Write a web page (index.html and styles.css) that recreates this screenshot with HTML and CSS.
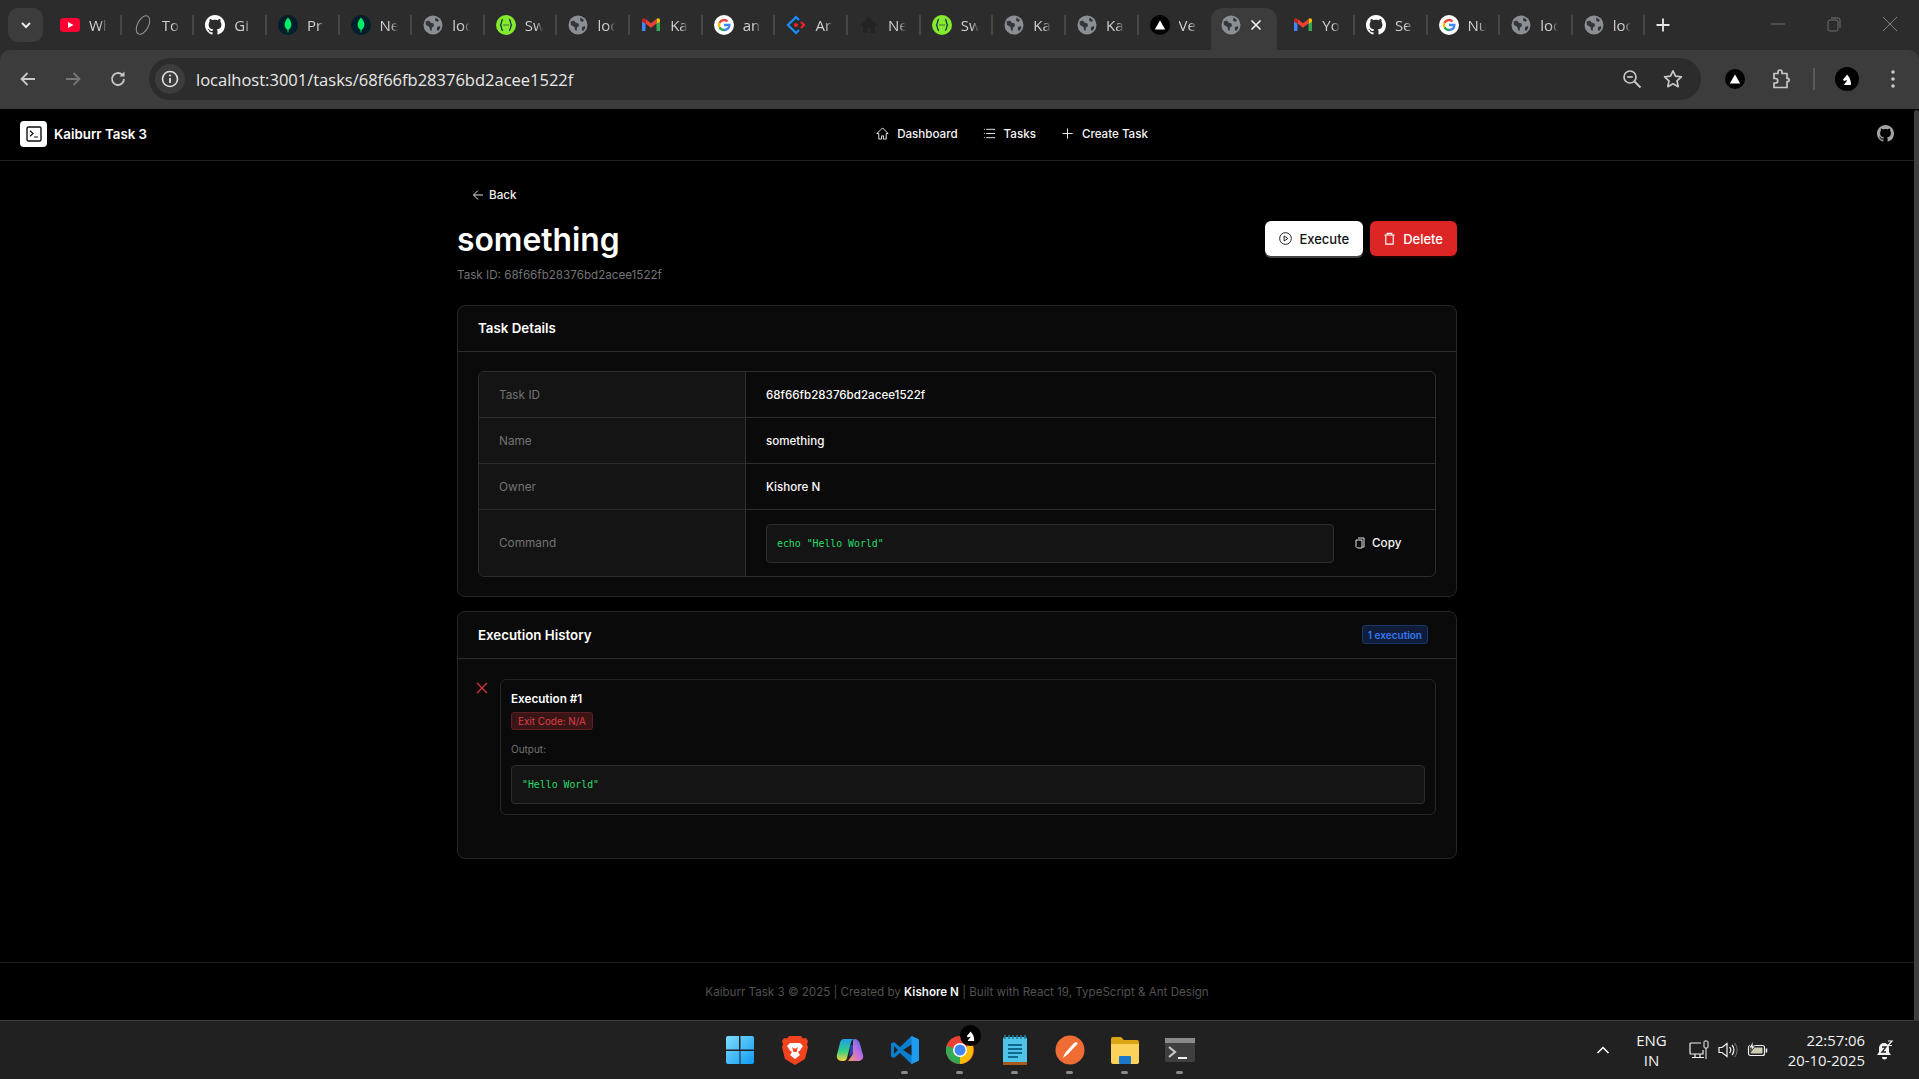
FILE: index.html
```html
<!DOCTYPE html>
<html lang="en">
<head>
    <meta charset="UTF-8">
    <title>something - Kaiburr Task 3</title>
    <link rel="stylesheet" href="styles.css">
</head>
<body>
    <svg class="sprites" width="0" height="0">
        <symbol id="i-yt" viewBox="0 0 20 20"><rect x="0" y="3" width="20" height="14" rx="3.500" fill="#ff0033"/><path d="M8 7l5.500 3L8 13z" fill="#fff"/></symbol>
        <symbol id="i-oval" viewBox="0 0 20 20"><ellipse cx="10" cy="10" rx="5.500" ry="10" transform="rotate(28 10 10)" fill="none" stroke="#9a9a9a" stroke-width="1"/></symbol>
        <symbol id="i-gh" viewBox="0 0 16 16"><path fill="currentColor" d="M8 0C3.580 0 0 3.580 0 8c0 3.540 2.290 6.530 5.470 7.590.4.070.55-.17.55-.38 0-.19-.01-.82-.01-1.490-2.010.37-2.530-.49-2.690-.94-.09-.23-.48-.94-.82-1.130-.28-.15-.68-.52-.01-.53.63-.01 1.080.58 1.230.82.72 1.210 1.870.87 2.330.66.07-.52.28-.87.51-1.070-1.780-.2-3.640-.89-3.640-3.950 0-.87.31-1.590.82-2.150-.08-.2-.36-1.020.08-2.120 0 0 .67-.21 2.200.82.64-.18 1.320-.27 2-.27.68 0 1.360.09 2 .27 1.530-1.040 2.200-.82 2.200-.82.44 1.100.16 1.920.08 2.120.51.56.82 1.270.82 2.150 0 3.070-1.870 3.750-3.650 3.950.29.25.54.73.54 1.480 0 1.070-.01 1.930-.01 2.200 0 .21.15.46.55.38A8.013 8.013 0 0016 8c0-4.420-3.580-8-8-8z"/></symbol>
        <symbol id="i-mongo" viewBox="0 0 20 20"><circle cx="10" cy="10" r="10" fill="#001e2b"/><path d="M10 2.500c2.600 2.900 3.600 5.400 3.400 7.600-.2 2.400-1.700 4-2.900 4.800l-.2 2.600h-.6l-.2-2.600c-1.300-.9-2.800-2.500-2.900-4.900C6.500 7.800 7.500 5.300 10 2.500z" fill="#00ed64"/></symbol>
        <symbol id="i-globe" viewBox="0 0 20 20"><circle cx="10" cy="10" r="9.500" fill="#8b8f94"/><path d="M2.500 6.500l3.500-1 1.500 2 3 1 .5 2.500-2 1.500-.5 3.500-1.500-1-.5-3-3.500-2zM12.500 2.500l3.500 2.500-1.500 2-2.500-1.500zM14 12l3-1 .3 2-2 3-1.500-1z" fill="#34363a"/></symbol>
        <symbol id="i-swagger" viewBox="0 0 20 20"><circle cx="10" cy="10" r="10" fill="#85ea2d"/><path d="M7 4.500c-2 0-1 4-2.500 5.500C6 11.500 5 15.500 7 15.500M13 4.500c2 0 1 4 2.500 5.500-1.500 1.500-.5 5.500-2.500 5.500" fill="none" stroke="#173647" stroke-width="1.300"/><path d="M7.600 10h.9M9.600 10h.9M11.600 10h.9" stroke="#173647" stroke-width="1.300"/></symbol>
        <symbol id="i-gmail" viewBox="0 0 20 20"><path d="M1 5.500V16h3.500V8z" fill="#4285f4"/><path d="M15.500 8V16H19V5.500z" fill="#34a853"/><path d="M15.500 4v5L19 6.500V5c0-1.800-2.200-2.500-3.500-1z" fill="#fbbc04"/><path d="M4.500 8.500V4L10 8.200 15.500 4v4.500L10 12.700z" fill="#ea4335"/><path d="M1 5c0-1.800 2.200-2.500 3.500-1v5L1 6.500z" fill="#c5221f"/></symbol>
        <symbol id="i-google" viewBox="0 0 20 20"><circle cx="10" cy="10" r="10" fill="#fff"/><path d="M10 10h5.300c0 3-2.200 5-5.300 5" fill="none" stroke="#4285f4" stroke-width="2.400"/><path d="M10 15a5 5 0 01-4.500-2.800" fill="none" stroke="#34a853" stroke-width="2.400"/><path d="M5.500 12.300a5 5 0 010-4.600" fill="none" stroke="#fbbc04" stroke-width="2.400"/><path d="M5.500 7.700A5 5 0 0113.500 6.500" fill="none" stroke="#ea4335" stroke-width="2.400"/></symbol>
        <symbol id="i-ant" viewBox="0 0 20 20"><path d="M13 5l-3-3-8 8 8 8 3-3" fill="none" stroke="#1890ff" stroke-width="2.200"/><path d="M15 7l3 3-3 3" fill="none" stroke="#f5222d" stroke-width="2.200"/><circle cx="10" cy="10" r="2.100" fill="#f5222d"/></symbol>
        <symbol id="i-house" viewBox="0 0 20 20"><path d="M10 2L1 10.500h3V18h4.500v-5h3v5H16v-7.500h3z" fill="#232323"/></symbol>
        <symbol id="i-vercel" viewBox="0 0 20 20"><circle cx="10" cy="10" r="10" fill="#000"/><path d="M10 5.500l5.200 9H4.800z" fill="#fff"/></symbol>
    </svg>

    <div class="tabstrip">
        <button class="tab-search"><svg width="14" height="14" viewBox="0 0 14 14"><path d="M3 5l4 4 4-4" fill="none" stroke="#e8e8e8" stroke-width="2"/></svg></button>
        <div class="tab"><svg class="fav"><use href="#i-yt"/></svg><span class="tab-title">Wh</span></div>
        <div class="tab"><svg class="fav"><use href="#i-oval"/></svg><span class="tab-title">To</span></div>
        <div class="tab"><svg class="fav"><use href="#i-gh"/></svg><span class="tab-title">Gi</span></div>
        <div class="tab"><svg class="fav"><use href="#i-mongo"/></svg><span class="tab-title">Pr</span></div>
        <div class="tab"><svg class="fav"><use href="#i-mongo"/></svg><span class="tab-title">Ne</span></div>
        <div class="tab"><svg class="fav"><use href="#i-globe"/></svg><span class="tab-title">localhost</span></div>
        <div class="tab"><svg class="fav"><use href="#i-swagger"/></svg><span class="tab-title">Sw</span></div>
        <div class="tab"><svg class="fav"><use href="#i-globe"/></svg><span class="tab-title">localhost</span></div>
        <div class="tab"><svg class="fav"><use href="#i-gmail"/></svg><span class="tab-title">Ka</span></div>
        <div class="tab"><svg class="fav"><use href="#i-google"/></svg><span class="tab-title">an</span></div>
        <div class="tab"><svg class="fav"><use href="#i-ant"/></svg><span class="tab-title">Ar</span></div>
        <div class="tab"><svg class="fav"><use href="#i-house"/></svg><span class="tab-title">Ne</span></div>
        <div class="tab"><svg class="fav"><use href="#i-swagger"/></svg><span class="tab-title">Sw</span></div>
        <div class="tab"><svg class="fav"><use href="#i-globe"/></svg><span class="tab-title">Ka</span></div>
        <div class="tab"><svg class="fav"><use href="#i-globe"/></svg><span class="tab-title">Ka</span></div>
        <div class="tab no-sep"><svg class="fav"><use href="#i-vercel"/></svg><span class="tab-title">Ve</span></div>
        <div class="tab tab-active no-sep"><svg class="fav"><use href="#i-globe"/></svg><svg class="tab-close" width="14" height="14" viewBox="0 0 14 14"><path d="M2.500 2.500l9 9M11.500 2.500l-9 9" stroke="#f0f0f0" stroke-width="1.700"/></svg></div>
        <div class="tab"><svg class="fav"><use href="#i-gmail"/></svg><span class="tab-title">Yo</span></div>
        <div class="tab"><svg class="fav"><use href="#i-gh"/></svg><span class="tab-title">Se</span></div>
        <div class="tab"><svg class="fav"><use href="#i-google"/></svg><span class="tab-title">Nu</span></div>
        <div class="tab"><svg class="fav"><use href="#i-globe"/></svg><span class="tab-title">localhost</span></div>
        <div class="tab"><svg class="fav"><use href="#i-globe"/></svg><span class="tab-title">localhost</span></div>
        <svg class="new-tab" width="16" height="16" viewBox="0 0 16 16"><path d="M8 1.500v13M1.500 8h13" stroke="#e8e8e8" stroke-width="1.800"/></svg>
        <div class="window-btns">
            <svg width="16" height="16" viewBox="0 0 16 16"><path d="M1 8h14" stroke="#6f6f6f"/></svg>
            <svg width="16" height="16" viewBox="0 0 16 16"><rect x="2" y="4" width="10" height="11" rx="2" fill="none" stroke="#6f6f6f"/><path d="M5 2h7a2 2 0 012 2v8" fill="none" stroke="#6f6f6f"/></svg>
            <svg width="16" height="16" viewBox="0 0 16 16"><path d="M1 1l14 14M15 1L1 15" stroke="#7f7f7f"/></svg>
        </div>
    </div>

    <div class="toolbar">
        <svg class="nav-btn" width="20" height="20" viewBox="0 0 20 20"><path d="M17 10H4M9.500 4L3.500 10l6 6" fill="none" stroke="#c8c8c8" stroke-width="1.800"/></svg>
        <svg class="nav-btn" width="20" height="20" viewBox="0 0 20 20"><path d="M3 10h13M10.500 4l6 6-6 6" fill="none" stroke="#777" stroke-width="1.800"/></svg>
        <svg class="nav-btn" width="20" height="20" viewBox="0 0 20 20"><path d="M16 10a6 6 0 11-1.800-4.300" fill="none" stroke="#c8c8c8" stroke-width="1.800"/><path d="M16.500 2.500v5h-5z" fill="#c8c8c8"/></svg>
        <div class="omnibox">
            <span class="site-info"><svg width="18" height="18" viewBox="0 0 18 18"><circle cx="9" cy="9" r="7.500" fill="none" stroke="#e0e0e0" stroke-width="1.600"/><path d="M9 8v5" stroke="#e0e0e0" stroke-width="1.800"/><circle cx="9" cy="5.500" r="1.100" fill="#e0e0e0"/></svg></span>
            <span class="url">localhost:3001/tasks/68f66fb28376bd2acee1522f</span>
            <svg class="omni-zoom" width="20" height="20" viewBox="0 0 20 20"><circle cx="8" cy="8" r="6" fill="none" stroke="#c8c8c8" stroke-width="1.700"/><path d="M5.200 8h5.600" stroke="#c8c8c8" stroke-width="1.700"/><path d="M12.500 12.500l6 6" stroke="#c8c8c8" stroke-width="1.900"/></svg>
            <svg class="omni-star" width="20" height="20" viewBox="0 0 20 20"><path d="M10 1.800l2.500 5.400 5.900.7-4.400 4 1.200 5.800L10 14.800l-5.200 2.900L6 11.900l-4.400-4 5.900-.7z" fill="none" stroke="#c8c8c8" stroke-width="1.700" stroke-linejoin="round"/></svg>
        </div>
        <svg class="ext-vercel" width="20" height="20"><use href="#i-vercel"/></svg>
        <svg class="ext-puzzle" width="20" height="20" viewBox="0 0 20 20"><path d="M2 4.500h4V3a2 2 0 014 0v1.500h5v5h1.500a2 2 0 010 3H15V18.500H2v-4.500h1.500a2.200 2.200 0 000-4.500H2z" fill="none" stroke="#c8c8c8" stroke-width="1.700" stroke-linejoin="round"/></svg>
        <span class="toolbar-sep"></span>
        <span class="profile"><svg width="12" height="13" viewBox="0 0 12 13"><path d="M3 12h7c0-3-.5-6-2-8L6 1.500 5 3 2 6.500l1 1.500 3-1c0 1.500-2 2.500-3 5z" fill="#fff"/></svg></span>
        <svg class="menu-dots" width="4" height="18" viewBox="0 0 4 18"><circle cx="2" cy="2" r="1.800" fill="#c8c8c8"/><circle cx="2" cy="9" r="1.800" fill="#c8c8c8"/><circle cx="2" cy="16" r="1.800" fill="#c8c8c8"/></svg>
    </div>

    <div class="viewport">
        <div class="page">
            <header class="app-header">
                <div class="brand">
                    <span class="brand-logo"><svg width="16" height="16" viewBox="0 0 16 16"><rect x="1" y="1" width="14" height="14" rx="1.500" fill="none" stroke="#111" stroke-width="1.400"/><path d="M4 4.800L7 7.500 4 10.200M8 11h4" fill="none" stroke="#111" stroke-width="1.200"/></svg></span>
                    <span class="brand-name">Kaiburr Task 3</span>
                </div>
                <nav class="main-nav">
                    <a class="nav-link"><svg width="13" height="13" viewBox="0 0 14 14"><path d="M7 1L1 7h2v6h3V9.500h2V13h3V7h2z" fill="none" stroke="#f5f5f5" stroke-linejoin="round"/></svg>Dashboard</a>
                    <a class="nav-link"><svg width="13" height="13" viewBox="0 0 14 14"><path d="M3.500 2.500H13M3.500 7H13M3.500 11.500H13" stroke="#f5f5f5"/><path d="M1 2.500h1M1 7h1M1 11.500h1" stroke="#f5f5f5"/></svg>Tasks</a>
                    <a class="nav-link"><svg width="13" height="13" viewBox="0 0 14 14"><path d="M7 1.500v11M1.500 7h11" stroke="#f5f5f5"/></svg>Create Task</a>
                </nav>
                <svg class="header-github" width="17" height="17"><use href="#i-gh"/></svg>
            </header>

            <main class="content">
                <button class="back-btn"><svg width="12" height="12" viewBox="0 0 12 12"><path d="M11 6H1.500M6 1.500L1.500 6 6 10.500" fill="none" stroke="#e5e5e5"/></svg>Back</button>
                <div class="title-row">
                    <div>
                        <h1 class="task-title">something</h1>
                        <p class="task-sub">Task ID: 68f66fb28376bd2acee1522f</p>
                    </div>
                    <div class="title-actions">
                        <button class="btn btn-white"><svg width="13" height="13" viewBox="0 0 14 14"><circle cx="7" cy="7" r="6.300" fill="none" stroke="#111"/><path d="M5.500 4.300L9.500 7l-4 2.700z" fill="none" stroke="#111"/></svg>Execute</button>
                        <button class="btn btn-red"><svg width="13" height="13" viewBox="0 0 14 14"><path d="M1.500 3.200h11M4.500 3V1.500h5V3M3 3.200V13h8V3.200" fill="none" stroke="#fff" stroke-width="1.200"/></svg>Delete</button>
                    </div>
                </div>

                <section class="card">
                    <div class="card-head"><h3>Task Details</h3></div>
                    <div class="card-body">
                        <div class="detail-table">
                            <div class="detail-row">
                                <div class="detail-label">Task ID</div>
                                <div class="detail-value">68f66fb28376bd2acee1522f</div>
                            </div>
                            <div class="detail-row">
                                <div class="detail-label">Name</div>
                                <div class="detail-value">something</div>
                            </div>
                            <div class="detail-row">
                                <div class="detail-label">Owner</div>
                                <div class="detail-value">Kishore N</div>
                            </div>
                            <div class="detail-row detail-row-cmd">
                                <div class="detail-label">Command</div>
                                <div class="detail-value">
                                    <code class="code-box">echo "Hello World"</code>
                                    <button class="copy-btn"><svg width="12" height="12" viewBox="0 0 12 12"><path d="M4 1h6v9H8.500M2 3h6v8H3.500L2 9.500z" fill="none" stroke="#e5e5e5"/></svg>Copy</button>
                                </div>
                            </div>
                        </div>
                    </div>
                </section>

                <section class="card">
                    <div class="card-head card-head-tall">
                        <h3>Execution History</h3>
                        <span class="count-tag">1 execution</span>
                    </div>
                    <div class="card-body card-body-history">
                        <div class="timeline-item">
                            <svg class="timeline-x" width="14" height="14" viewBox="0 0 14 14"><path d="M2 2l10 10M12 2L2 12" stroke="#d9363e" stroke-width="1.200"/></svg>
                            <div class="exec-box">
                                <div class="exec-title">Execution #1</div>
                                <span class="exit-tag">Exit Code: N/A</span>
                                <div class="exec-label">Output:</div>
                                <code class="code-box code-box-full">"Hello World"</code>
                            </div>
                        </div>
                    </div>
                </section>
            </main>

            <footer class="app-footer">Kaiburr Task 3 © 2025 | Created by <strong>Kishore N</strong> | Built with React 19, TypeScript &amp; Ant Design</footer>
        </div>
        <div class="scrollbar"><div class="scroll-thumb"></div></div>
    </div>

    <div class="taskbar">
        <div></div>
        <div class="task-icons">
            <span class="task-icon"><svg width="30" height="30" viewBox="0 0 30 30"><defs><linearGradient id="win" x1="0" y1="0" x2="1" y2="1"><stop offset="0" stop-color="#7fdcff"/><stop offset="1" stop-color="#0f9bf0"/></linearGradient></defs><path d="M1 3a2 2 0 012-2h11v13.500H1zM15.500 1H27a2 2 0 012 2v11.500H15.500zM1 16h13.500v13H3a2 2 0 01-2-2zM15.500 16H29v11a2 2 0 01-2 2H15.500z" fill="url(#win)"/></svg></span>
            <span class="task-icon"><svg width="28" height="30" viewBox="0 0 28 30"><path d="M8 1h12l2 2.500 3-.5 2 3-1 3.500 1 2.500-3 12-10 6-10-6-3-12 1-2.500-1-3.500 2-3 3 .5z" fill="#f1431e"/><path d="M9 8h10l3 3-3 4.500-2 1.500 2 3-5 4-5-4 2-3-2-1.500L6 11z" fill="#fff"/><path d="M11 12l2 1.500h2l2-1.500-1.500 5h-3z" fill="#f1431e"/></svg></span>
            <span class="task-icon"><svg width="30" height="30" viewBox="0 0 30 30"><defs><linearGradient id="cop1" x1="0" y1="0" x2="0" y2="1"><stop offset="0" stop-color="#1f9fe8"/><stop offset=".55" stop-color="#35cf86"/><stop offset="1" stop-color="#f6d23c"/></linearGradient><linearGradient id="cop2" x1="1" y1="0" x2="0" y2="1"><stop offset="0" stop-color="#2a6bea"/><stop offset=".5" stop-color="#c86fe0"/><stop offset="1" stop-color="#f79a56"/></linearGradient></defs><path d="M19 4c3 0 5 1.500 6 5l3 11c1 3.500-1.500 6-4.500 6H13l5-7V8c0-2 0-4 1-4z" fill="url(#cop2)"/><path d="M9 4h10c-1.500 0-2.500 1.500-3 3.500L12 23c-.5 2-1.500 3-3.500 3H7c-4 0-6-3-5-6.500L5 8c.6-2.500 2-4 4-4z" fill="url(#cop1)"/><path d="M15.500 9.500l2.500 1v8l-3.500 3z" fill="#2446b8"/></svg></span>
            <span class="task-icon"><svg width="30" height="30" viewBox="0 0 30 30"><path d="M21.500 1L29 4.500v21L21.500 29 10 18l-6 5-3-1.500v-13L4 7l6 5z" fill="#0a7fcf"/><path d="M21.500 1L29 4.500v21L21.500 29z" fill="#1f9cf0"/><path d="M21.500 9.500L13 15l8.500 5.500z" fill="#222"/><path d="M4 11v8l4-4z" fill="#222"/></svg></span>
            <span class="task-icon"><svg width="30" height="30" viewBox="0 0 30 30"><circle cx="15" cy="15" r="14" fill="#ea4335"/><path d="M15 15L27 9a14 14 0 01-12 20z" fill="#fbbc04"/><path d="M15 15L15 29A14 14 0 011.500 11z" fill="#34a853"/><circle cx="15" cy="15" r="7" fill="#fff"/><circle cx="15" cy="15" r="5.500" fill="#4285f4"/></svg><span class="task-badge"><svg width="11" height="12" viewBox="0 0 12 13"><path d="M3 12h7c0-3-.5-6-2-8L6 1.500 5 3 2 6.500l1 1.500 3-1c0 1.500-2 2.500-3 5z" fill="#fff"/></svg></span></span>
            <span class="task-icon"><svg width="26" height="32" viewBox="0 0 26 32"><rect x="1" y="3" width="24" height="28" rx="2" fill="#4fc3e8"/><rect x="1" y="28" width="24" height="3" fill="#a85a1c"/><path d="M3 1v4M7 1v4M11 1v4M15 1v4M19 1v4M23 1v4" stroke="#1a7fa8" stroke-width="1.600"/><path d="M6 11h14M6 15h14M6 19h14M6 23h10" stroke="#10688c" stroke-width="1.800"/></svg></span>
            <span class="task-icon"><svg width="30" height="30" viewBox="0 0 30 30"><circle cx="15" cy="15" r="14.500" fill="#ef6c35"/><path d="M8 23l2-5 9-10c1.500-1.500 4-1 3.500 1l-10 10.500z" fill="#fff"/></svg></span>
            <span class="task-icon"><svg width="30" height="28" viewBox="0 0 30 28"><path d="M1 3a2 2 0 012-2h8l3 3h13a2 2 0 012 2v5H1z" fill="#dca515"/><path d="M1 8h28v18a2 2 0 01-2 2H3a2 2 0 01-2-2z" fill="#fdd25a"/><rect x="9" y="20" width="12" height="8" rx="1" fill="#1976c9"/></svg></span>
            <span class="task-icon"><svg width="30" height="24" viewBox="0 0 30 24"><rect width="30" height="24" rx="2" fill="#3f3f3f"/><rect width="30" height="5" fill="#8a8a8a"/><path d="M4 9l6 5-6 5" fill="none" stroke="#c8c8c8" stroke-width="2.200"/><path d="M13 20h9" stroke="#f5f5f5" stroke-width="2"/></svg></span>
        </div>
        <div class="tray">
            <svg width="14" height="14" viewBox="0 0 14 14"><path d="M1.500 10L7 4.500 12.500 10" fill="none" stroke="#fff" stroke-width="1.500"/></svg>
            <div class="tray-lang"><span>ENG</span><span>IN</span></div>
            <svg class="tray-net" width="21" height="20" viewBox="0 0 21 20"><path d="M12 3H2a1 1 0 00-1 1v9a1 1 0 001 1h12v-4M6 14v3M3 17.500h12M11 14v3" fill="none" stroke="#f2f2f2" stroke-width="1.200"/><rect x="15" y="1" width="4" height="7" rx="1" fill="none" stroke="#f2f2f2"/><path d="M17 8v11" stroke="#f2f2f2"/></svg>
            <svg class="tray-vol" width="21" height="18" viewBox="0 0 21 18"><path d="M1 6.500v5h3l5 4v-13l-5 4z" fill="none" stroke="#f2f2f2" stroke-width="1.200"/><path d="M11.500 6a4.500 4.500 0 010 6M14 4a7.500 7.500 0 010 10" fill="none" stroke="#f2f2f2" stroke-width="1.200"/><path d="M16.500 2a10.500 10.500 0 010 14" fill="none" stroke="#666" stroke-width="1.200"/></svg>
            <svg class="tray-batt" width="21" height="18" viewBox="0 0 21 18"><rect x="1.500" y="4.500" width="16" height="10" rx="2" fill="none" stroke="#f2f2f2" stroke-width="1.200"/><rect x="3.500" y="6.500" width="12" height="6" rx="1" fill="#cfc9b0"/><path d="M19.500 7.500v4" stroke="#f2f2f2" stroke-width="1.500"/><path d="M6 0L2 7h3L3.500 11 8.500 5H6z" fill="#f2f2f2" stroke="#212121" stroke-width=".8"/></svg>
            <div class="tray-clock"><span>22:57:06</span><span>20-10-2025</span></div>
            <svg class="tray-bell" width="20" height="20" viewBox="0 0 20 20"><path d="M9 3a5 5 0 00-5 5v4l-2 3h14l-2-3V8a5 5 0 00-5-5z" fill="#f2f2f2"/><path d="M7 17a2.500 2.500 0 005 0z" fill="#f2f2f2"/><path d="M7 7h4l-4 5h4" fill="none" stroke="#202020" stroke-width="1.300"/><path d="M13 1h4l-4 4.500h4" fill="none" stroke="#f2f2f2" stroke-width="1.200"/></svg>
        </div>
    </div>
</body>
</html>
```

FILE: styles.css
```css
* {
    box-sizing: border-box;
}
html, body {
    height: 100%;
}
body {
    margin: 0;
    height: 100vh;
    overflow: hidden;
    display: flex;
    flex-direction: column;
    font-family: Inter, "Liberation Sans", sans-serif;
    background-color: #2c2c2c;
    color: #fff;
}
button {
    font-family: inherit;
    border: none;
    background: none;
    cursor: pointer;
}
.sprites {
    position: absolute;
}

/* browser chrome */
.tabstrip {
    height: 50px;
    flex-shrink: 0;
    display: flex;
    align-items: flex-start;
    padding-left: 8px;
    background-color: #2c2c2c;
    font-family: "Open Sans", "Liberation Sans", sans-serif;
}
.tab-search {
    width: 35px;
    height: 34px;
    margin: 8px 6px 0 0;
    padding: 0;
    display: flex;
    align-items: center;
    justify-content: center;
    border-radius: 10px;
    background-color: #3c3c3c;
}
.tab {
    width: 72.65px;
    height: 42px;
    margin-top: 8px;
    padding: 0 0 8px 11px;
    display: flex;
    align-items: center;
    gap: 9px;
    position: relative;
    color: #fff;
}
.tab::after {
    content: "";
    position: absolute;
    right: 0;
    top: 7px;
    height: 20px;
    width: 2px;
    background-color: #474747;
}
.tab.no-sep::after {
    display: none;
}
.fav {
    width: 20px;
    height: 20px;
    flex-shrink: 0;
}
.tab-title {
    width: 18px;
    overflow: hidden;
    white-space: nowrap;
    font-size: 15px;
    color: #cfcfcf;
    -webkit-mask-image: linear-gradient(to right, #000 60%, transparent);
    mask-image: linear-gradient(to right, #000 60%, transparent);
}
.tab-active {
    width: 66px;
    padding: 0 14px 8px 10px;
    justify-content: space-between;
    gap: 0;
    background-color: #3c3c3c;
    border-radius: 12px 12px 0 0;
}
.tab-active + .tab {
    margin-left: 5px;
}
.tab-close {
    flex-shrink: 0;
}
.new-tab {
    margin: 17px 0 0 10px;
}
.window-btns {
    margin-left: auto;
    padding: 16px 21px 0 0;
    display: flex;
    gap: 40px;
}
.toolbar {
    height: 59px;
    flex-shrink: 0;
    display: flex;
    align-items: flex-start;
    padding: 8px 0 0 18px;
    background-color: #3c3c3c;
    border-radius: 10px 10px 0 0;
}
.nav-btn {
    margin: 11px 25px 0 0;
}
.nav-btn:nth-child(3) {
    margin-right: 21px;
}
.omnibox {
    width: 1552px;
    height: 42px;
    flex-shrink: 0;
    display: flex;
    align-items: center;
    padding: 0 18px 0 6px;
    border-radius: 21px;
    background-color: #2c2c2c;
}
.site-info {
    width: 30px;
    height: 30px;
    display: flex;
    align-items: center;
    justify-content: center;
    border-radius: 50%;
    background-color: #3c3c3c;
}
.url {
    margin-left: 11px;
    font-family: "Open Sans", "Liberation Sans", sans-serif;
    font-size: 16.5px;
    color: #e8e8e8;
}
.omni-zoom {
    margin-left: auto;
}
.omni-star {
    margin-left: 21px;
}
.ext-vercel {
    margin: 11px 0 0 24px;
}
.ext-puzzle {
    margin: 11px 0 0 27px;
}
.toolbar-sep {
    width: 2px;
    height: 22px;
    margin: 10px 0 0 21px;
    background-color: #5a5a5a;
}
.profile {
    width: 24px;
    height: 24px;
    margin: 9px 0 0 20px;
    display: flex;
    align-items: center;
    justify-content: center;
    border-radius: 50%;
    background-color: #000;
}
.menu-dots {
    margin: 12px 0 0 32px;
}

/* app page */
.viewport {
    flex: 1;
    min-height: 0;
    display: flex;
    background-color: #000;
}
.page {
    flex: 1;
    min-width: 0;
    display: flex;
    flex-direction: column;
}
.scrollbar {
    width: 5px;
    padding-top: 1px;
    background-color: #000;
}
.scroll-thumb {
    height: 100%;
    border-radius: 3px 3px 0 0;
    background-color: #3f3f3f;
}
.app-header {
    height: 52px;
    flex-shrink: 0;
    display: flex;
    align-items: center;
    justify-content: space-between;
    padding: 0 20px 2px;
    border-bottom: 1px solid #1f1f1f;
}
.header-github {
    color: #a3a3a3;
}
.brand {
    display: flex;
    align-items: center;
    gap: 7px;
}
.brand-logo {
    width: 27px;
    height: 26px;
    display: flex;
    align-items: center;
    justify-content: center;
    border-radius: 4px;
    background-color: #fff;
}
.brand-name {
    font-size: 13.3px;
    font-weight: 600;
}
.main-nav {
    display: flex;
    gap: 25px;
}
.nav-link {
    display: flex;
    align-items: center;
    gap: 8px;
    font-size: 11.6px;
    font-weight: 500;
    color: #f5f5f5;
}
.content {
    flex: 1;
    width: 1000px;
    margin: 0 auto;
    padding-top: 22px;
}
.back-btn {
    height: 24px;
    padding: 0 0 0 15px;
    display: flex;
    align-items: center;
    gap: 5px;
    font-size: 11.7px;
    font-weight: 500;
    color: #f0f0f0;
}
.title-row {
    display: flex;
    justify-content: space-between;
    align-items: flex-start;
    margin-top: 13px;
    margin-bottom: 21px;
}
.task-title {
    margin: 0;
    font-size: 31.8px;
    font-weight: 600;
    line-height: 40px;
}
.task-sub {
    margin: 6px 0 0;
    font-size: 11.65px;
    line-height: 18px;
    color: #737373;
}
.title-actions {
    display: flex;
    gap: 7px;
    margin-top: 1px;
}
.btn {
    height: 35px;
    padding: 0 14px;
    display: flex;
    align-items: center;
    gap: 7px;
    font-size: 13px;
    font-weight: 500;
    border-radius: 6px;
}
.btn-white {
    background-color: #fff;
    color: #111;
    box-shadow: 0 2px 0 #444;
}
.btn-red {
    padding: 0 14px 0 13px;
    background-color: #dc2626;
    color: #fff;
    box-shadow: 0 2px 0 #1a0505;
}
.card {
    margin-bottom: 14px;
    background-color: #0a0a0a;
    border: 1px solid #262626;
    border-radius: 8px;
}
.card-head {
    height: 46px;
    padding: 0 28px 1px 20px;
    display: flex;
    align-items: center;
    justify-content: space-between;
    border-bottom: 1px solid #2e2e2e;
}
.card-head-tall {
    height: 47px;
}
.card-head h3 {
    margin: 0;
    font-size: 13.3px;
    font-weight: 600;
}
.card-body {
    padding: 19px 20px 19px;
}
.detail-table {
    border: 1px solid #2e2e2e;
    border-radius: 6px;
    overflow: hidden;
}
.detail-row {
    display: flex;
    height: 46px;
    border-bottom: 1px solid #2e2e2e;
}
.detail-row-cmd {
    height: 66px;
    border-bottom: none;
}
.detail-label {
    width: 267px;
    flex-shrink: 0;
    display: flex;
    align-items: center;
    padding-left: 20px;
    font-size: 11.8px;
    color: #737373;
    background-color: #141414;
    border-right: 1px solid #2e2e2e;
}
.detail-value {
    flex: 1;
    display: flex;
    align-items: center;
    padding-left: 20px;
    font-size: 11.6px;
    font-weight: 500;
    color: #fafafa;
}
.code-box {
    display: block;
    width: 568px;
    height: 39px;
    padding: 0 10px;
    line-height: 37px;
    font-family: "DejaVu Sans Mono", "Liberation Mono", monospace;
    font-size: 9.85px;
    font-weight: 400;
    color: #2bdc6c;
    background-color: #141414;
    border: 1px solid #2e2e2e;
    border-radius: 4px;
}
.code-box-full {
    width: 100%;
}
.copy-btn {
    margin-left: 20px;
    padding: 0;
    display: flex;
    align-items: center;
    gap: 6px;
    font-size: 11.7px;
    font-weight: 500;
    color: #f5f5f5;
}
.count-tag {
    height: 19px;
    padding: 0 5px;
    display: flex;
    align-items: center;
    font-size: 10px;
    font-weight: 600;
    color: #3578f5;
    background-color: #101d38;
    border: 1px solid #1c3666;
    border-radius: 3px;
}
.card-body-history {
    padding: 20px 20px 43px 20px;
}
.timeline-item {
    display: flex;
    align-items: flex-start;
    margin-left: -3px;
}
.timeline-x {
    flex-shrink: 0;
    margin: 2px 11px 0 0;
    width: 14px;
}
.exec-box {
    flex: 1;
    height: 136px;
    padding: 11px 10px 0;
    background-color: #0a0a0a;
    border: 1px solid #262626;
    border-radius: 6px;
}
.exec-title {
    font-size: 11.7px;
    font-weight: 600;
    line-height: 16px;
}
.exit-tag {
    display: inline-block;
    height: 18px;
    margin-top: 5px;
    padding: 0 6px;
    line-height: 16px;
    font-size: 9.9px;
    color: #dc4040;
    background-color: #3a1518;
    border: 1px solid #5c1f22;
    border-radius: 3px;
}
.exec-label {
    margin-top: 12px;
    margin-bottom: 9px;
    font-size: 10px;
    line-height: 14px;
    color: #737373;
}
.app-footer {
    height: 58px;
    flex-shrink: 0;
    display: flex;
    align-items: center;
    justify-content: center;
    white-space: pre;
    font-size: 11.6px;
    color: #525252;
    border-top: 1px solid #1f1f1f;
}
.app-footer strong {
    font-weight: 600;
    color: #f5f5f5;
}

/* windows taskbar */
.taskbar {
    height: 59px;
    flex-shrink: 0;
    display: grid;
    grid-template-columns: 1fr auto 1fr;
    align-items: center;
    background-color: #212121;
    border-top: 1px solid #3a3a3a;
    font-family: "Open Sans", "Liberation Sans", sans-serif;
}
.task-icons {
    display: flex;
}
.task-icon {
    width: 55px;
    height: 58px;
    display: flex;
    align-items: center;
    justify-content: center;
    position: relative;
}
.task-icon:nth-child(n+4)::after {
    content: "";
    position: absolute;
    bottom: 5px;
    left: 24px;
    width: 7px;
    height: 3px;
    border-radius: 2px;
    background-color: #8a8a8a;
}
.task-badge {
    position: absolute;
    top: 4px;
    left: 28px;
    width: 21px;
    height: 21px;
    display: flex;
    align-items: center;
    justify-content: center;
    border-radius: 50%;
    background-color: #000;
}
.tray {
    display: flex;
    align-items: center;
    justify-content: flex-end;
    padding-right: 24px;
}
.tray-lang {
    display: flex;
    flex-direction: column;
    align-items: center;
    margin: 0 22px 0 26px;
    font-size: 15px;
    line-height: 20px;
    color: #f2f2f2;
}
.tray-vol, .tray-batt {
    margin-left: 8px;
}
.tray-clock {
    display: flex;
    flex-direction: column;
    align-items: flex-end;
    margin: 0 10px 0 20px;
    font-size: 14.8px;
    line-height: 20px;
    color: #f2f2f2;
}
```
